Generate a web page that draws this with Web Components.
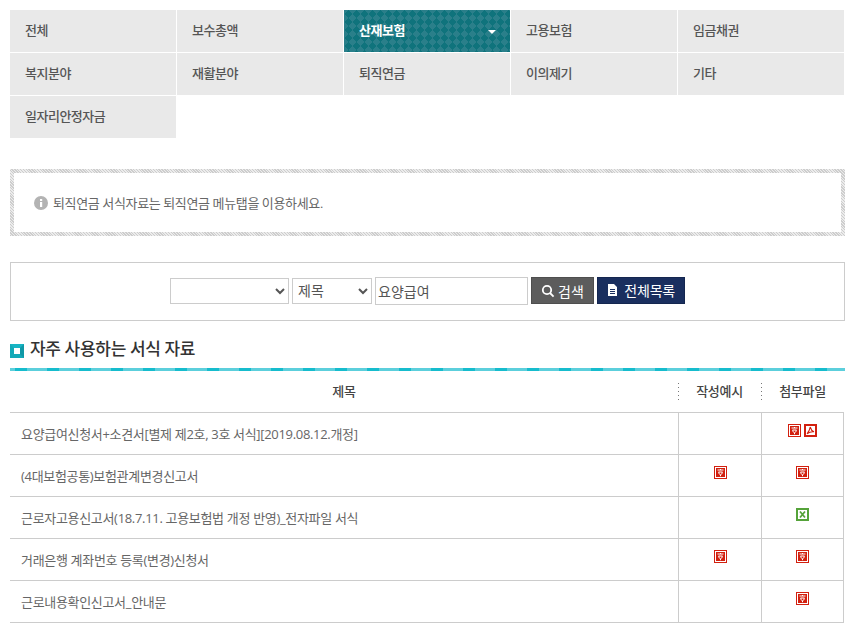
<!DOCTYPE html>
<html lang="ko"><head><meta charset="utf-8"><title>서식 자료</title>
<style>
html,body{margin:0;padding:0;background:#fff}
body{font-family:Roboto,"Noto Sans CJK KR",sans-serif;color:#555;font-size:13px}
</style></head><body>
<x-page>
  <x-tabs>
    <x-tab>전체</x-tab><x-tab>보수총액</x-tab><x-tab active>산재보험</x-tab><x-tab>고용보험</x-tab><x-tab>임금채권</x-tab>
    <x-tab>복지분야</x-tab><x-tab>재활분야</x-tab><x-tab>퇴직연금</x-tab><x-tab>이의제기</x-tab><x-tab>기타</x-tab>
    <x-tab>일자리안정자금</x-tab>
  </x-tabs>
  <x-notice>퇴직연금 서식자료는 퇴직연금 메뉴탭을 이용하세요.</x-notice>
  <x-search></x-search>
  <x-heading>자주 사용하는 서식 자료</x-heading>
  <x-table>
    <x-row head><span>제목</span><span slot="ex">작성예시</span><span slot="file">첨부파일</span></x-row>
    <x-row><span>요양급여신청서+소견서[별제 제2호, 3호 서식][2019.08.12.개정]</span><span slot="file"><x-icon type="hwp"></x-icon><x-icon type="pdf"></x-icon></span></x-row>
    <x-row><span>(4대보험공통)보험관계변경신고서</span><span slot="ex"><x-icon type="hwp"></x-icon></span><span slot="file"><x-icon type="hwp"></x-icon></span></x-row>
    <x-row><span>근로자고용신고서(18.7.11. 고용보험법 개정 반영)_전자파일 서식</span><span slot="file"><x-icon type="xls"></x-icon></span></x-row>
    <x-row><span>거래은행 계좌번호 등록(변경)신청서</span><span slot="ex"><x-icon type="hwp"></x-icon></span><span slot="file"><x-icon type="hwp"></x-icon></span></x-row>
    <x-row><span>근로내용확인신고서_안내문</span><span slot="file"><x-icon type="hwp"></x-icon></span></x-row>
  </x-table>
</x-page>
<script>
function def(name,html,extra){
  customElements.define(name,class extends HTMLElement{
    constructor(){super();this.attachShadow({mode:'open'}).innerHTML=html;}
    connectedCallback(){extra&&extra.call(this);}
  });
}
const FONT='Roboto,"Noto Sans CJK KR",sans-serif';
const BODY='"Open Sans","Noto Sans CJK KR",sans-serif';
def('x-page',`<style>:host{display:block;width:835px;padding:10px 10px 0;box-sizing:content-box}</style><slot></slot>`);
def('x-tabs',`<style>:host{display:grid;grid-template-columns:repeat(5,166px);grid-auto-rows:42px;gap:1px;width:834px}</style><slot></slot>`);
def('x-tab',`<style>
:host{display:flex;align-items:center;padding:0 15px;background:#e9e9e9;color:#555;font:500 13px/42px ${FONT};letter-spacing:-.5px;position:relative;white-space:nowrap}
:host([active]){color:#fff;font-weight:700;background-color:#0f737c;
background-image:linear-gradient(45deg,#2a7f8a 25%,transparent 25%),linear-gradient(-45deg,#2a7f8a 25%,transparent 25%),linear-gradient(135deg,#2a7f8a 25%,transparent 25%),linear-gradient(-135deg,#2a7f8a 25%,transparent 25%);background-size:8px 8px}
i{display:none;position:absolute;right:14px;top:20px;border:4px solid transparent;border-top-color:#fff;border-bottom:0}
:host([active]) i{display:block}
</style><slot></slot><i></i>`);
def('x-notice',`<style>
:host{display:block;margin-top:31px;padding:4px;height:59px;background:repeating-linear-gradient(45deg,#cdcdcd 0 1px,#ececec 1px 2px)}
div{height:100%;background:#fff;display:flex;align-items:center;padding-left:20px;color:#666;font:13px ${FONT};letter-spacing:-.35px}
svg{margin-right:5px;flex:none}
</style><div><svg width="14" height="14" viewBox="0 0 14 14"><circle cx="7" cy="7" r="7" fill="#b3b3b3"/><rect x="6" y="6" width="2.2" height="5" fill="#fff"/><rect x="6" y="3" width="2.2" height="2" fill="#fff"/></svg><span><slot></slot></span></div>`);
def('x-search',`<style>
:host{display:flex;margin-top:26px;height:59px;box-sizing:border-box;border:1px solid #ccc;padding-bottom:2px;justify-content:center;align-items:center;font:14px ${FONT};color:#555}
select{height:26px;box-sizing:border-box;border:1px solid #ccc;background:#fff;color:#555;font:14px ${FONT};padding:0 0 0 1px;margin:0 3px 0 0}
.a{width:119px}.b{width:80px}
input{width:153px;height:28px;box-sizing:border-box;border:1px solid #ccc;font:14px ${FONT};color:#555;padding:0 2px;margin:0 3px 0 0;outline:0}
.btn{display:flex;align-items:center;justify-content:center;height:27px;box-sizing:border-box;color:#fff;font:14px ${FONT};gap:3px}
.s{width:63px;background:#5c5c5c;border:1px solid #4e4e4e;margin-right:3px}
.l{width:88px;background:#1a2f5f;border:1px solid #14264f;height:27px;margin-top:-1px;letter-spacing:-.2px}
</style>
<select class="a" aria-label="분류"><option></option></select>
<select class="b" aria-label="검색 항목"><option>제목</option></select>
<input value="요양급여" aria-label="검색어">
<div class="btn s"><svg width="14" height="14" viewBox="0 0 14 14" fill="none" stroke="#fff" stroke-width="1.8"><circle cx="6" cy="6" r="4.2"/><path d="M9 9l3.6 3.6"/></svg>검색</div>
<div class="btn l"><svg width="11" height="12" viewBox="0 0 11 12"><path fill="#fff" fill-rule="evenodd" d="M1 0h6l3 3v9H1zM3 5v1h5V5zM3 7v1h5V7zM3 9v1h5V9z"/></svg>&nbsp;전체목록</div>`);
def('x-heading',`<style>
:host{display:flex;flex-direction:column;justify-content:space-between;margin-top:16px;height:34px;font:500 17px/24px ${FONT};letter-spacing:-.3px;color:#333}
div{display:flex;align-items:center;height:24px}
i{display:block;width:14px;height:14px;box-sizing:border-box;border:4px solid #13a9b8;border-top-color:#17b5c4;border-right-color:#0f98a6;background:#fff;margin-right:6px;margin-top:3px}
b{display:block;height:3px;background:linear-gradient(90deg,#5ccfdc 0 20px,#16bccd 20px 32px) 17px 0/32px 3px}
</style><div><i></i><span><slot></slot></span></div><b></b>`);
def('x-table',`<style>:host{display:block;width:834px;border-bottom:1px solid #ccc}</style><slot></slot>`);
def('x-row',`<style>
:host{display:grid;grid-template-columns:668px 83px 83px;height:41px;box-sizing:content-box;border-top:1px solid #ccc;font:13px ${BODY};color:#666;letter-spacing:-.32px}
:host([head]){height:41px;border-top:0;color:#444;font:500 13px ${FONT};letter-spacing:-.3px}
.c{display:flex;align-items:center;justify-content:center;gap:3px;line-height:1}
.t{justify-content:flex-start;padding:1px 0 0 11px}
.x,.f{border-left:1px solid #ccc;box-sizing:border-box;position:relative}
.f{border-right:1px solid #ccc}
:host(:not([head])) .x,:host(:not([head])) .f{padding-bottom:6px}
:host([head]) .c{padding:0}
:host([head]) .t{justify-content:center}
:host([head]) .x,:host([head]) .f{border:0}
:host([head]) .x::before,:host([head]) .f::before{content:"";position:absolute;left:0;top:12px;height:18px;width:1px;background:repeating-linear-gradient(180deg,#777 0 1px,transparent 1px 4px)}
</style><div class="c t"><slot></slot></div><div class="c x"><slot name="ex"></slot></div><div class="c f"><slot name="file"></slot></div>`);
def('x-icon',`<style>:host{display:inline-block;width:13px;height:13px;vertical-align:top;margin:0 1.5px}svg{display:block}</style><span id="h"></span>`,function(){
  const t=this.getAttribute('type');
  const c=t==='xls'?'#55a33a':'#d2200f';
  let g='';
  if(t==='hwp')g=`<rect x="0" y="0" width="13" height="13" fill="${c}"/><rect x="1.500" y="1.500" width="10" height="10" fill="${c}" stroke="#fff"/><path d="M3.500 4h6M4.500 6h4M4.800 6c0 2 .7 2.500 1.700 2.500S8.200 8 8.200 6M6.500 3v1M6.500 9v1.200" stroke="#fff" fill="none"/>`;
  if(t==='pdf')g=`<rect x="1" y="1" width="11" height="11" fill="#fff" stroke="${c}" stroke-width="2"/><path d="M6.200 3c-.3 2-1.200 4.500-3.200 6.800 2-1.500 4.500-2.300 7-2-2-.8-3.200-2.500-3.800-4.800" stroke="${c}" stroke-width="1.100" fill="none"/>`;
  if(t==='xls')g=`<rect x="1" y="1" width="11" height="11" fill="#fff" stroke="${c}" stroke-width="2"/><path d="M4 3.500l5 6M9 3.500l-5 6" stroke="${c}" stroke-width="1.800" fill="none"/>`;
  this.shadowRoot.getElementById('h').innerHTML=`<svg width="13" height="13" viewBox="0 0 13 13">${g}</svg>`;
});
</script>
</body></html>
